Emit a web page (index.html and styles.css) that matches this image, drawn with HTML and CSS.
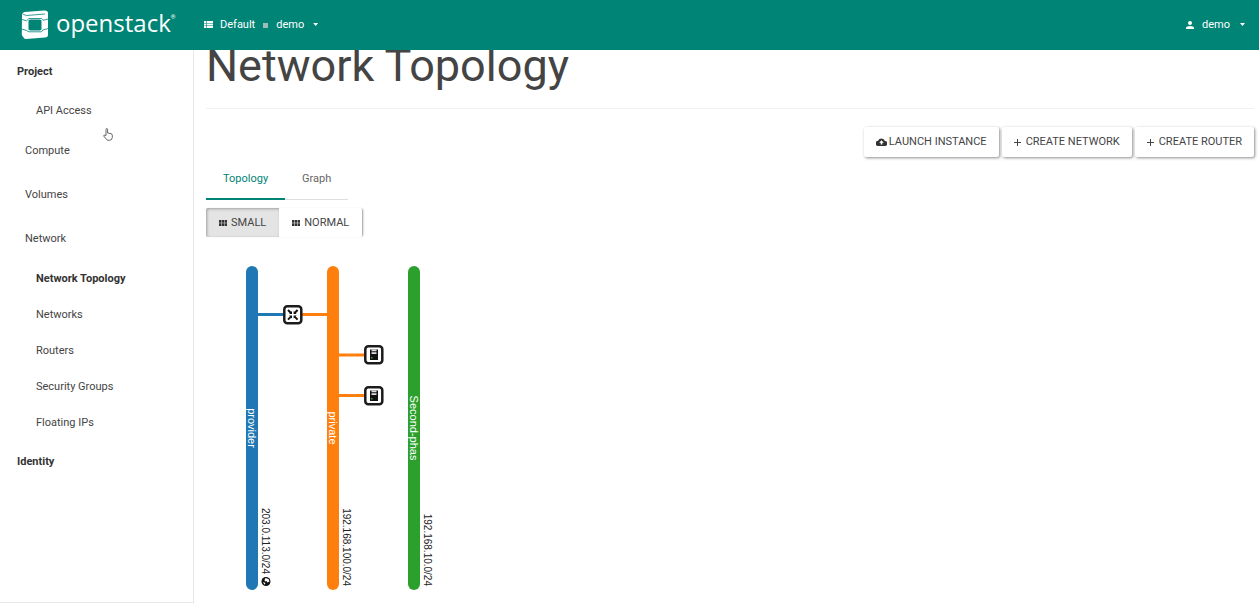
FILE: index.html
```html
<!DOCTYPE html>
<html lang="en">
<head>
<meta charset="utf-8">
<title>Network Topology</title>
<link rel="stylesheet" href="styles.css">
</head>
<body>
<header class="topbar">
  <a class="brand" href="#">
    <svg class="brand-mark" width="28" height="30" viewBox="0 0 28 30" aria-hidden="true">
      <path fill="#fff" d="M1 4.500Q1 2.500 3.500 2L23 .5Q27 .3 27 3V25Q27 27.300 24 27.600L5 29Q3.500 29 2.500 27.500L.8 25Z"/>
      <path fill="#008476" d="M9 9.500H19L20.500 10.500V19.500L19 20.500H9L7.500 19.500V10.500Z"/>
      <path fill="none" stroke="#008476" stroke-width=".8" d="M1.500 4L5.500 5.500L24 4M1 9.500L5.500 10.800L8 8.500H20.500L22 10.300L27 9M1 19L5.500 20.500L8 21.800H20.500L22 20L27 18.500"/>
    </svg>
    <span class="brand-name">openstack</span><span class="brand-reg">®</span>
  </a>
  <button class="menu" type="button">
    <svg width="9" height="7" viewBox="0 0 9 7" fill="#fff" aria-hidden="true"><path d="M0 0h2v2H0zM2.600 0H9v2H2.600zM0 2.500h2v2H0zM2.600 2.500H9v2H2.600zM0 5h2v2H0zM2.600 5H9v2H2.600z"/></svg>
    <span>Default</span><span class="dot"></span><span>demo</span><span class="caret"></span>
  </button>
  <button class="menu menu-user" type="button">
    <svg width="8" height="8" viewBox="0 0 8 8" fill="#fff" aria-hidden="true"><circle cx="4" cy="2" r="2"/><path d="M0 8V6.700Q.5 5 4 5T8 6.700V8z"/></svg>
    <span>demo</span><span class="caret"></span>
  </button>
</header>
<div class="shell">
  <nav class="sidebar">
    <a class="nav-top" href="#">Project</a>
    <a class="nav-item" href="#">API Access</a>
    <a class="nav-group" href="#">Compute</a>
    <a class="nav-group" href="#">Volumes</a>
    <a class="nav-group" href="#">Network</a>
    <a class="nav-item active" href="#">Network Topology</a>
    <a class="nav-item" href="#">Networks</a>
    <a class="nav-item" href="#">Routers</a>
    <a class="nav-item" href="#">Security Groups</a>
    <a class="nav-item" href="#">Floating IPs</a>
    <a class="nav-top" href="#">Identity</a>
  </nav>
  <main class="content">
    <h1>Network Topology</h1>
    <div class="actions">
      <button class="btn" type="button"><svg width="11" height="8" viewBox="0 0 11 8" aria-hidden="true"><path fill="#333" fill-rule="evenodd" d="M2.600 8A2.600 2.600 0 0 1 2.100 2.800A3.600 3.600 0 0 1 8.900 2.900A2.500 2.500 0 0 1 8.700 8ZM5.500 2.200L3.200 4.700H4.700V6.600H6.300V4.700H7.800Z"/></svg>Launch Instance</button>
      <button class="btn btn-add" type="button"><svg width="7" height="7" viewBox="0 0 7 7" aria-hidden="true"><path stroke="#444" d="M3.500 0V7M0 3.500H7"/></svg>Create Network</button>
      <button class="btn btn-add" type="button"><svg width="7" height="7" viewBox="0 0 7 7" aria-hidden="true"><path stroke="#444" d="M3.500 0V7M0 3.500H7"/></svg>Create Router</button>
    </div>
    <div class="tabs">
      <a class="tab selected" href="#">Topology</a>
      <a class="tab" href="#">Graph</a>
    </div>
    <div class="sizes">
      <button class="size pressed" type="button"><svg width="8" height="6" viewBox="0 0 8 6" fill="#333" aria-hidden="true"><path d="M0 0h2.300v2.700H0zM2.800 0h2.300v2.700H2.800zM5.600 0H8v2.700H5.600zM0 3.200h2.300V6H0zM2.800 3.200h2.300V6H2.800zM5.600 3.200H8V6H5.600z"/></svg>Small</button>
      <button class="size" type="button"><svg width="8" height="6" viewBox="0 0 8 6" fill="#333" aria-hidden="true"><path d="M0 0h2.300v2.700H0zM2.800 0h2.300v2.700H2.800zM5.600 0H8v2.700H5.600zM0 3.200h2.300V6H0zM2.800 3.200h2.300V6H2.800zM5.600 3.200H8V6H5.600z"/></svg>Normal</button>
    </div>
    <svg class="topology" width="240" height="340" viewBox="0 0 240 340" role="img" aria-label="Network topology">
      <defs>
        <g id="instance">
          <rect x="1.300" y="1.300" width="17" height="17" rx="3" fill="#fff" stroke="#1c1c1c" stroke-width="2.500"/>
          <path fill="#111" d="M6 4.500h8v10.500H6z"/><path fill="#ddd" d="M7.500 4.500h5v1.800h-5zM7.500 7.200h5v1.800h-5z"/><path fill="#2ca02c" d="M7 12h1.500v1.500H7z"/>
        </g>
      </defs>
      <g stroke-width="3">
        <path stroke="#1f77b4" d="M52 58.500H79"/>
        <path stroke="#ff7f0e" d="M95 58.500H122M133 99H160M133 139.500H160"/>
      </g>
      <rect x="40" y="10" width="12" height="324" rx="6" fill="#1f77b4"/>
      <rect x="121" y="10" width="12" height="324" rx="6" fill="#ff7f0e"/>
      <rect x="202" y="10" width="12" height="324" rx="6" fill="#2ca02c"/>
      <g transform="translate(77 49)">
        <rect x="1.300" y="1.300" width="17" height="17" rx="3" fill="#fff" stroke="#1c1c1c" stroke-width="2.500"/>
        <path stroke="#111" stroke-width="2" d="M5 5L8 8M14.600 5L11.600 8M5 14.600L8 11.600M14.600 14.600L11.600 11.600"/>
        <path fill="#111" d="M9 6V9H6zM10.600 6V9H13.600zM9 13.600V10.600H6zM10.600 13.600V10.600H13.600z"/>
      </g>
      <use href="#instance" x="158" y="89"/>
      <use href="#instance" x="158" y="130"/>
      <g class="net-name">
        <text transform="translate(42 172) rotate(90)" text-anchor="middle">provider</text>
        <text transform="translate(123 172) rotate(90)" text-anchor="middle">private</text>
        <text transform="translate(204 172) rotate(90)" text-anchor="middle">Second-phas</text>
      </g>
      <g class="net-cidr">
        <text transform="translate(56 318) rotate(90)" text-anchor="end">203.0.113.0/24</text>
        <text transform="translate(137 330) rotate(90)" text-anchor="end">192.168.100.0/24</text>
        <text transform="translate(218 330) rotate(90)" text-anchor="end">192.168.10.0/24</text>
      </g>
      <circle cx="60" cy="325.500" r="4.500" fill="#111"/>
      <path fill="#fff" d="M59.500 322l3 1l1 2.500l-2 1l-1-1.500l-1.500 .5l-.5-1.500zM57 326l2.500 1l-1 1.800z"/>
    </svg>
  </main>
</div>
<svg class="pointer" width="10" height="13" viewBox="0 0 10 13" aria-hidden="true"><path fill="#fff" stroke="#555" stroke-width=".9" stroke-linejoin="round" d="M3 7.500V1.500Q3 .5 3.800 .5T4.600 1.500V5L8 5.700Q9.300 6 9.300 7.200V9.500Q9 12.300 6.500 12.300H5Q3.800 12 3.200 11L.7 8Q.6 7 1.600 7.200Z"/></svg>
</body>
</html>
```

FILE: styles.css
```css
* { box-sizing: border-box; }
body {
  margin: 0;
  background: #fff;
  color: #444;
  font: 11px/20px Roboto, sans-serif;
}
a { color: inherit; text-decoration: none; }
button { font: inherit; color: inherit; border: 0; background: none; padding: 0; }
.topbar {
  position: fixed;
  top: 0;
  left: 0;
  right: 0;
  z-index: 2;
  height: 50px;
  display: flex;
  align-items: center;
  padding: 0 14px 1px 21px;
  background: #008476;
  color: #fff;
}
.brand { display: flex; align-items: center; flex: 0 0 183px; }
.brand-mark { flex: none; }
.brand-name {
  margin-left: 7px;
  padding-bottom: 3px;
  font: 24px/40px "Open Sans", sans-serif;
}
.brand-reg { font-size: 6px; line-height: 6px; padding-bottom: 16px; }
.menu { display: flex; align-items: center; gap: 7px; }
.menu-user { margin-left: auto; gap: 8px; }
.dot { width: 5px; height: 5px; margin: 2px 1px 0; background: #9dbdb8; }
.caret {
  width: 5px;
  height: 3px;
  margin-left: 2px;
  background: #fff;
  clip-path: polygon(0 0, 100% 0, 50% 100%);
}
.shell { display: flex; min-height: 100vh; }
.sidebar {
  flex: 0 0 194px;
  padding-top: 51px;
  border: solid #e8e8e8;
  border-width: 0 1px 1px 0;
}
.sidebar a { display: block; }
.nav-top { padding-left: 17px; line-height: 42px; font-weight: 700; color: #333; }
.nav-group { padding-left: 25px; line-height: 44px; }
.nav-item { padding-left: 36px; line-height: 36px; }
.active { font-weight: 700; color: #333; }
.content { flex: 1; min-width: 0; padding: 38px 5px 0 12px; }
h1 {
  margin: 0 0 18px;
  padding-bottom: 14px;
  border-bottom: 1px solid #f0f0f0;
  font-size: 45px;
  line-height: 56px;
  font-weight: 400;
}
.actions { display: flex; justify-content: flex-end; gap: 3px; }
.btn {
  display: flex;
  align-items: center;
  gap: 2px;
  height: 30px;
  padding: 0 12px;
  border-radius: 2px;
  background: #fff;
  box-shadow: 1px 1px 3px rgba(0, 0, 0, .45);
  text-transform: uppercase;
}
.btn-add { gap: 5px; }
.tabs { display: inline-flex; margin-bottom: 8px; }
.tab {
  padding: 12px 17px 10px;
  border-bottom: 1px solid #ddd;
  color: #666;
}
.selected { color: #008476; box-shadow: inset 0 -1px #008476; border-color: #008476; }
.sizes {
  display: flex;
  width: max-content;
  border-radius: 2px;
  box-shadow: 2px 0 2px -1px #999;
}
.size {
  display: flex;
  align-items: center;
  gap: 4px;
  height: 29px;
  padding: 0 13px;
  text-transform: uppercase;
}
.pressed {
  background: #e4e4e4;
  border-radius: 2px 0 0 2px;
  box-shadow: inset 1px 1px 3px rgba(0, 0, 0, .3);
}
.topology { display: block; margin-top: 19px; }
.net-name { font: 11px "Liberation Sans", sans-serif; fill: #fff; }
.net-cidr { font: 10px "Liberation Sans", sans-serif; fill: #222; }
.pointer { position: absolute; left: 103px; top: 128px; }
```
